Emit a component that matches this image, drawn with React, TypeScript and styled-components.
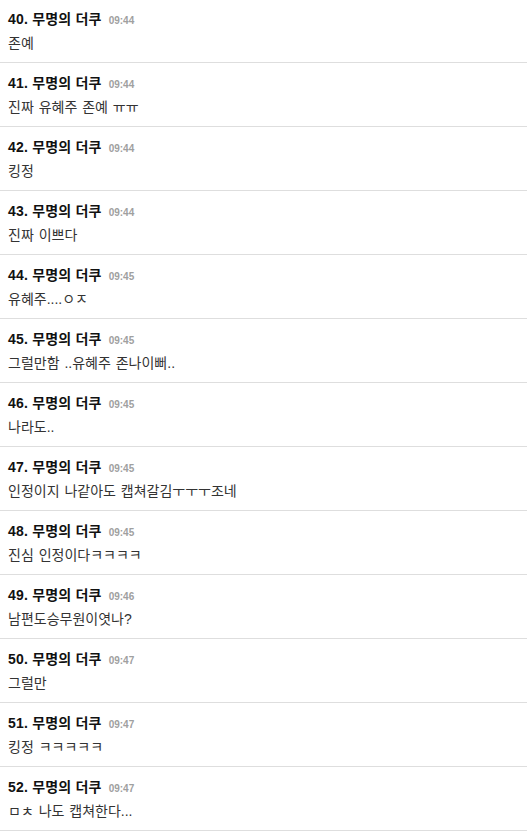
import React from 'react';
import styled, { createGlobalStyle } from 'styled-components';

const GlobalStyle = createGlobalStyle`
  body {
    margin: 0;
    background: #fff;
    font-family: "Liberation Sans", "Noto Sans CJK KR", sans-serif;
  }
`;

const List = styled.ul`
  list-style: none;
  margin: -1px 0 0;
  padding: 0;
`;

const Row = styled.li`
  display: flex;
  flex-direction: column;
  height: 64px;
  box-sizing: border-box;
  padding: 10px 8px 6px;
  border-bottom: 1px solid #dedede;
`;

const Header = styled.div`
  display: flex;
  align-items: baseline;
  gap: 7px;
  line-height: 20px;
`;

const Name = styled.span`
  font-size: 14px;
  font-weight: 700;
  color: #111;
  letter-spacing: 0.2px;
`;

const Time = styled.span`
  font-size: 10px;
  font-weight: 700;
  color: #a0a0a0;
`;

const Body = styled.div`
  margin-top: 1px;
  font-size: 14px;
  line-height: 22px;
  color: #333;
  word-spacing: 1px;
`;

const comments = [
  { no: 40, time: '09:44', text: '존예' },
  { no: 41, time: '09:44', text: '진짜 유혜주 존예 ㅠㅠ' },
  { no: 42, time: '09:44', text: '킹정' },
  { no: 43, time: '09:44', text: '진짜 이쁘다' },
  { no: 44, time: '09:45', text: '유혜주....ㅇㅈ' },
  { no: 45, time: '09:45', text: '그럴만함 ..유혜주 존나이뻐..' },
  { no: 46, time: '09:45', text: '나라도..' },
  { no: 47, time: '09:45', text: '인정이지 나같아도 캡쳐갈김ㅜㅜㅜ조네' },
  { no: 48, time: '09:45', text: '진심 인정이다ㅋㅋㅋㅋ' },
  { no: 49, time: '09:46', text: '남편도승무원이엿나?' },
  { no: 50, time: '09:47', text: '그럴만' },
  { no: 51, time: '09:47', text: '킹정 ㅋㅋㅋㅋㅋ' },
  { no: 52, time: '09:47', text: 'ㅁㅊ 나도 캡쳐한다...' },
];

export default function App() {
  return (
    <>
      <GlobalStyle />
      <List>
        {comments.map((c) => (
          <Row key={c.no}>
            <Header>
              <Name>{c.no}. 무명의 더쿠</Name>
              <Time>{c.time}</Time>
            </Header>
            <Body>{c.text}</Body>
          </Row>
        ))}
      </List>
    </>
  );
}
